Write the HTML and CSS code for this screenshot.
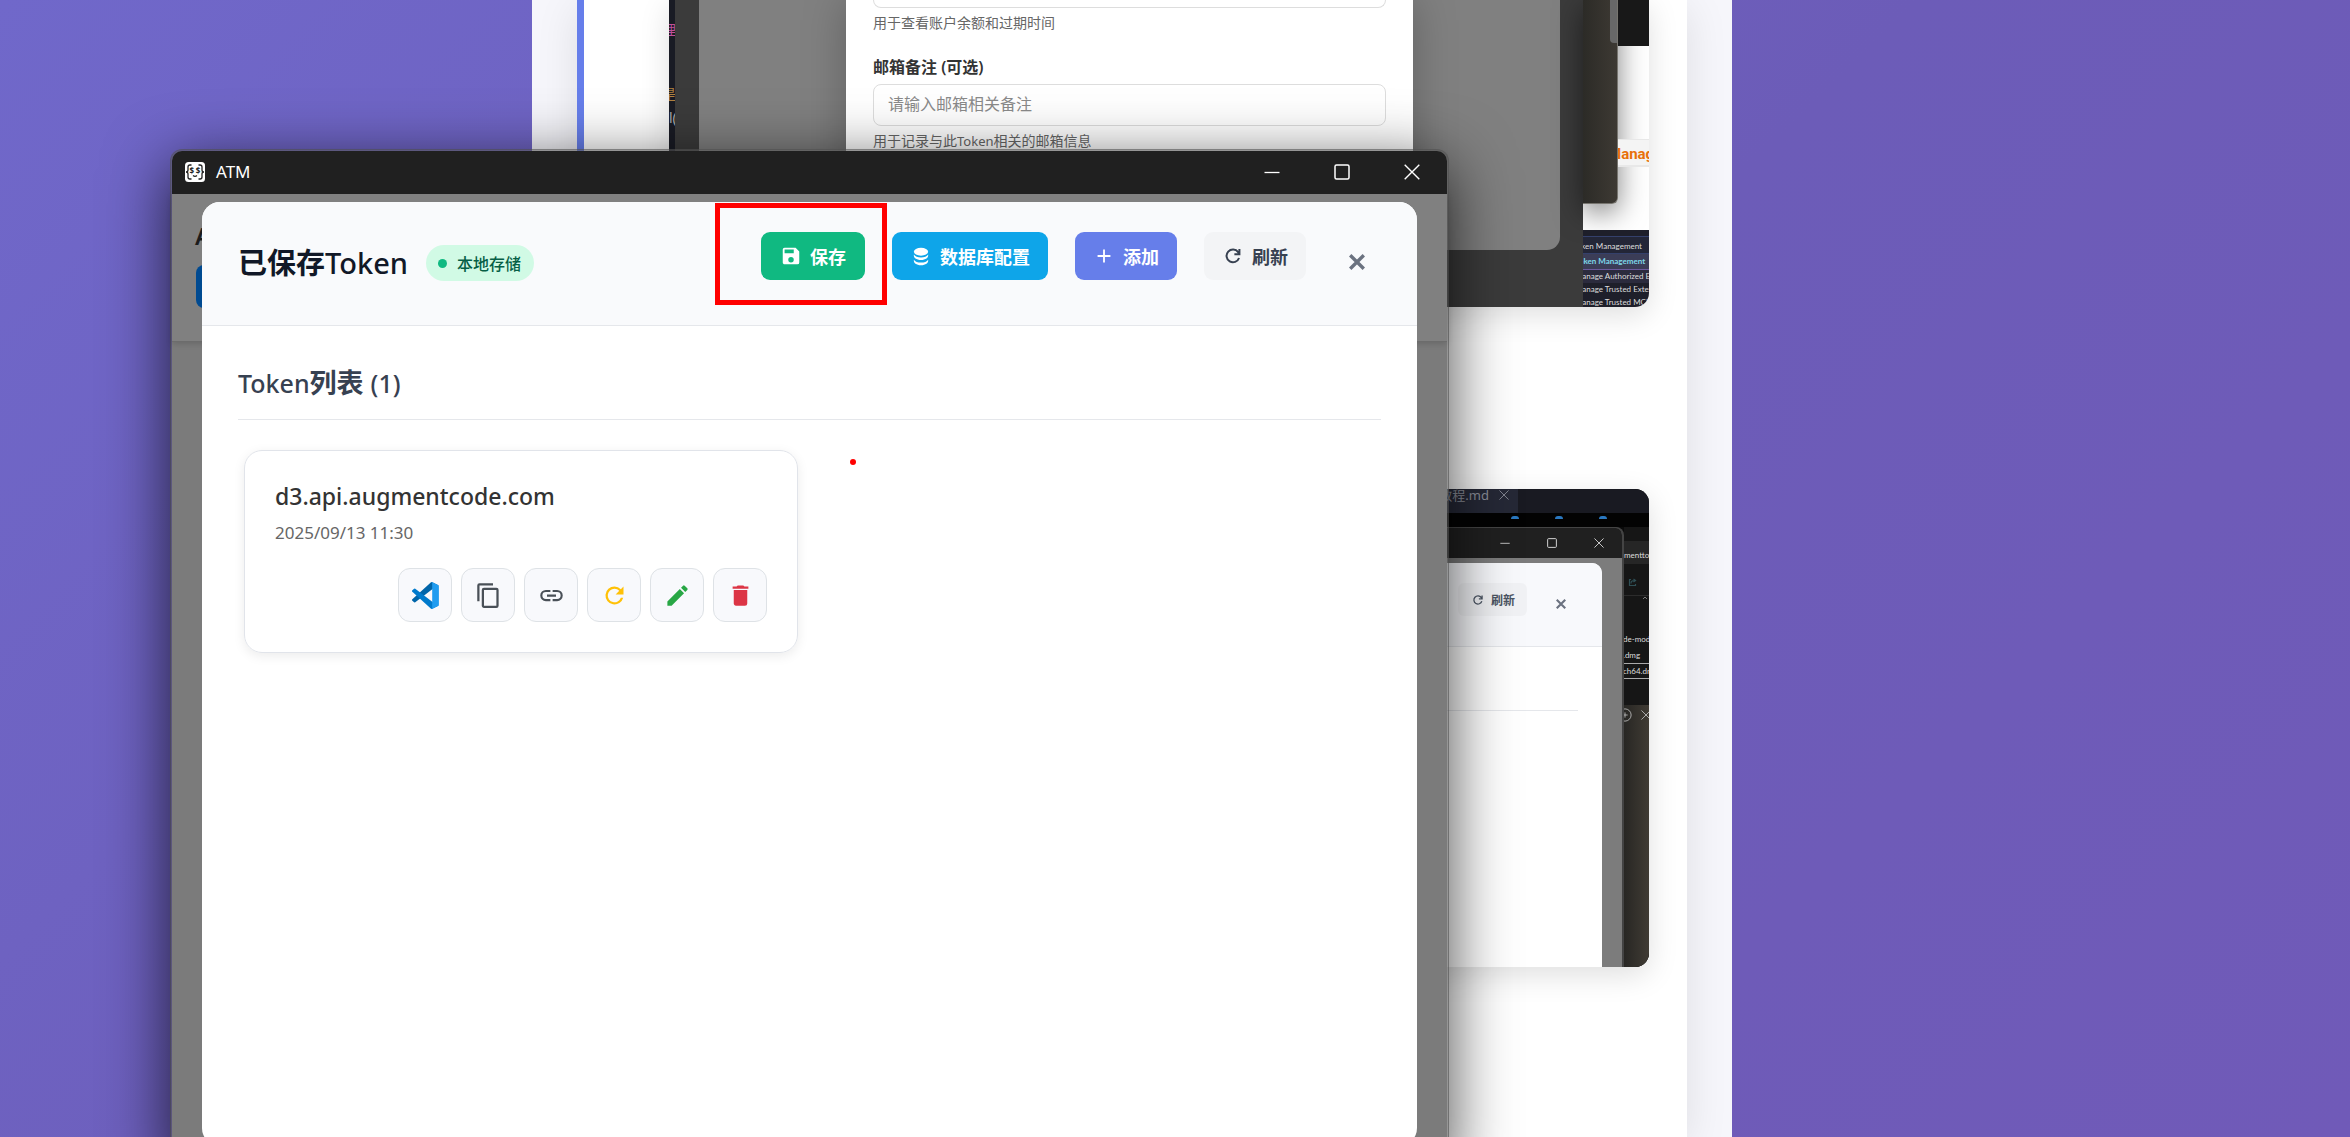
FILE: index.html
```html
<!DOCTYPE html>
<html lang="zh-CN">
<head>
<meta charset="utf-8">
<title>ATM</title>
<link rel="stylesheet" href="styles.css">
</head>
<body>
<svg class="defs" aria-hidden="true">
  <symbol id="i-refresh" viewBox="0 0 24 24"><path fill="currentColor" d="M17.65 6.35A7.96 7.96 0 0 0 12 4a8 8 0 1 0 7.73 10h-2.08A6 6 0 1 1 12 6c1.66 0 3.14.69 4.22 1.78L13 11h7V4z"/></symbol>
  <symbol id="i-refresh-thin" viewBox="0 0 24 24"><path fill="none" stroke="currentColor" stroke-width="2.2" d="M18.6 14.2A7 7 0 1 1 17.6 7.700L18.500 9M19 4.300V10H13.500"/></symbol>
  <symbol id="i-x" viewBox="0 0 16 16"><path fill="none" stroke="currentColor" stroke-width="3.400" d="M1.200 1.200l13.600 13.600M14.800 1.200L1.200 14.800"/></symbol>
  <symbol id="w-min" viewBox="0 0 16 16"><path fill="none" stroke="currentColor" stroke-width="1.300" d="M.5 8.500h15"/></symbol>
  <symbol id="w-max" viewBox="0 0 16 16"><rect x="1" y="1" width="14" height="14" rx="1.500" fill="none" stroke="currentColor" stroke-width="1.500"/></symbol>
  <symbol id="w-close" viewBox="0 0 16 16"><path fill="none" stroke="currentColor" stroke-width="1.400" d="M.7.7l14.600 14.600M15.300.7L.7 15.300"/></symbol>
</svg>

<div class="desktop">
  <main class="page">
    <section class="doc">
      <figure class="shot shot-form">
        <div class="code-strip"><span class="c-pink">理</span><span class="c-gold">是</span><span class="c-white">l(</span></div>
        <div class="shade">
          <div class="panel">
            <form class="form">
              <input class="field field-cut" type="text" aria-label="Portal URL">
              <p class="hint">用于查看账户余额和过期时间</p>
              <label class="label" for="mail">邮箱备注 (可选)</label>
              <input class="field" id="mail" type="text" placeholder="请输入邮箱相关备注">
              <p class="hint">用于记录与此<span>Token</span>相关的邮箱信息</p>
            </form>
          </div>
        </div>
        <div class="side">
          <div class="side-top">
            <div class="side-brown"><i></i></div>
            <div class="side-web"><div class="side-dark"></div><div class="side-link"><span>Manag</span></div></div>
          </div>
          <ul class="palette">
            <li class="p-input"><span>Token Management</span></li>
            <li class="p-active"><span>Token Management</span></li>
            <li class="p-hover"><span>Manage Authorized E</span></li>
            <li><span>Manage Trusted Extens</span></li>
            <li><span>Manage Trusted MCP</span></li>
          </ul>
        </div>
      </figure>

      <figure class="shot shot-list">
        <div class="tabbar"><div class="tab"><span>教程.md</span><svg><use href="#w-close"/></svg></div></div>
        <div class="browser-top"><i></i><i></i><i></i></div>
        <div class="shot-row">
          <div class="mini">
            <div class="mini-bar"><svg><use href="#w-min"/></svg><svg><use href="#w-max"/></svg><svg><use href="#w-close"/></svg></div>
            <div class="mini-body">
              <div class="mini-modal">
                <div class="mini-head">
                  <button class="mini-btn" type="button"><svg><use href="#i-refresh-thin"/></svg>刷新</button>
                  <button class="mini-close" type="button" aria-label="关闭"><svg><use href="#i-x"/></svg></button>
                </div>
                <div class="mini-line"></div>
              </div>
            </div>
          </div>
          <div class="rail">
            <div class="r-url"><span>menttov</span></div>
            <div class="r-icon"><svg viewBox="0 0 9 9"><path fill="none" stroke="#2f4f55" stroke-width="1.200" d="M3 1.500H1.500v6h6V6M3 5.500c0-2 1-3 3.500-3M5.500 1l2 1.500-2 1.500"/></svg></div>
            <div class="r-caret"><svg viewBox="0 0 6 4"><path fill="none" stroke="#777" d="M1 3l2-2 2 2"/></svg></div>
            <div class="r-file"><span>de-modi</span></div>
            <div class="r-file"><span>.dmg</span></div>
            <div class="r-file r-sel"><span>ch64.dm</span></div>
            <div class="r-wall"><svg viewBox="0 0 16 16"><circle cx="8" cy="8" r="7" fill="none" stroke="currentColor"/><path stroke="currentColor" d="M5 8h6M8 5v6"/></svg><svg class="r-x"><use href="#w-close"/></svg></div>
          </div>
        </div>
      </figure>
    </section>
  </main>

  <div class="window">
    <header class="titlebar">
      <svg class="app-icon" viewBox="0 0 20 20"><rect width="20" height="20" rx="3.500" fill="#fff"/><path fill="none" stroke="#222" stroke-width="1.300" d="M6.500 3H5Q3 3 3 5v3Q3 10 1 10 3 10 3 12v3q0 2 2 2h1.500M13.500 3H15q2 0 2 2v3q0 2 2 2-2 0-2 2v3q0 2-2 2h-1.500M8 13.500q2 1.600 4 0"/><text x="4.500" y="12" font-size="8" font-weight="700" fill="#222">$</text><text x="10.700" y="12" font-size="8" font-weight="700" fill="#222">$</text></svg>
      <span class="app-name">ATM</span>
      <button type="button" aria-label="最小化"><svg><use href="#w-min"/></svg></button>
      <button type="button" aria-label="最大化"><svg><use href="#w-max"/></svg></button>
      <button type="button" aria-label="关闭窗口"><svg><use href="#w-close"/></svg></button>
    </header>
    <div class="client">
      <div class="app-under"><b>A</b><i></i></div>
      <div class="modal">
        <div class="modal-head">
          <div class="heading"><h2>已保存<span>Token</span></h2><span class="badge">本地存储</span></div>
          <div class="actions">
            <button class="btn save" type="button"><svg viewBox="0 0 24 24"><path fill="currentColor" d="M17 3H5a2 2 0 0 0-2 2v14c0 1.100.9 2 2 2h14a2 2 0 0 0 2-2V7zm-5 16a3 3 0 1 1 0-6 3 3 0 0 1 0 6zm3-10H5V5h10z"/></svg>保存</button>
            <button class="btn db" type="button"><svg viewBox="0 0 24 24"><g fill="currentColor"><ellipse cx="12" cy="6" rx="9" ry="5"/><path d="M3 9.500c1.500 2.600 5 3.700 9 3.700s7.500-1.100 9-3.700c.8 4-3.300 7-9 7s-9.800-3-9-7zM3 16c1.500 2.600 5 3.700 9 3.700s7.500-1.100 9-3.700c.8 4-3.300 7-9 7s-9.800-3-9-7z"/></g></svg>数据库配置</button>
            <button class="btn add" type="button"><svg viewBox="0 0 24 24"><path fill="currentColor" d="M19 13h-6v6h-2v-6H5v-2h6V5h2v6h6z"/></svg>添加</button>
            <button class="btn refresh" type="button"><svg><use href="#i-refresh-thin"/></svg>刷新</button>
            <button class="close" type="button" aria-label="关闭"><svg><use href="#i-x"/></svg></button>
          </div>
        </div>
        <div class="modal-body">
          <h3><span>Token</span>列表 <span>(1)</span></h3>
          <div class="cards">
            <article class="card">
              <p class="host">d3.api.augmentcode.com</p>
              <p class="date">2025/09/13 11:30</p>
              <div class="tools">
                <button type="button" aria-label="VS Code"><svg class="i-lg" viewBox="0 0 100 100"><path fill="#0065a9" d="M96 11 75.500 1.200a6 6 0 0 0-7 1.200L1.300 63.500a4 4 0 0 0 0 6l5.500 5a4 4 0 0 0 5.300.3L93.200 13.200A4 4 0 0 1 100 16.500z"/><path fill="#007acc" d="M96 89 75.500 98.800a6 6 0 0 1-7-1.200L1.300 36.500a4 4 0 0 1 0-6l5.500-5a4 4 0 0 1 5.300-.3l81.100 61.600a4 4 0 0 0 6.800-3.300z"/><path fill="#1f9cf0" d="M75.500 98.800a6 6 0 0 1-7-1.200c2.300 2.300 6.300.7 6.300-2.500V5c0-3.300-4-5-6.300-2.600a6 6 0 0 1 7-1.200l20.600 9.900a6 6 0 0 1 3.500 5.600v66.600a6 6 0 0 1-3.500 5.600z"/></svg></button>
                <button type="button" aria-label="复制"><svg class="i-lg grey" viewBox="0 0 24 24"><path fill="currentColor" d="M16 1H4a2 2 0 0 0-2 2v14h2V3h12zm3 4H8a2 2 0 0 0-2 2v14c0 1.100.9 2 2 2h11a2 2 0 0 0 2-2V7a2 2 0 0 0-2-2zm0 16H8V7h11z"/></svg></button>
                <button type="button" aria-label="复制链接"><svg class="i-lg grey" viewBox="0 0 24 24"><path fill="currentColor" d="M3.900 12A3.100 3.100 0 0 1 7 8.900h4V7H7a5 5 0 0 0 0 10h4v-1.900H7A3.100 3.100 0 0 1 3.900 12zM8 13h8v-2H8zm9-6h-4v1.900h4a3.100 3.100 0 0 1 0 6.200h-4V17h4a5 5 0 0 0 0-10z"/></svg></button>
                <button type="button" aria-label="刷新"><svg class="i-lg yellow"><use href="#i-refresh"/></svg></button>
                <button type="button" aria-label="编辑"><svg class="i-lg green" viewBox="0 0 24 24"><path fill="currentColor" d="M3 17.250V21h3.750L17.810 9.940l-3.750-3.750zM20.710 7.040a1 1 0 0 0 0-1.410l-2.340-2.340a1 1 0 0 0-1.410 0l-1.830 1.830 3.750 3.750z"/></svg></button>
                <button type="button" aria-label="删除"><svg class="i-lg red" viewBox="0 0 24 24"><path fill="currentColor" d="M6 19c0 1.100.9 2 2 2h8a2 2 0 0 0 2-2V7H6zM19 4h-3.500l-1-1h-5l-1 1H5v2h14z"/></svg></button>
              </div>
            </article>
          </div>
        </div>
      </div>
    </div>
  </div>
  <div class="mark-box"></div>
  <div class="mark-dot"></div>
</div>
</body>
</html>
```
FILE: styles.css
```css
* { box-sizing: border-box; }
body {
  margin: 0;
  font-family: "Noto Sans", "Noto Sans CJK SC", sans-serif;
}
p, h2, h3, ul, figure { margin: 0; padding: 0; }
button { border: 0; padding: 0; background: none; font: inherit; color: inherit; }
svg { display: block; flex: none; }
.defs { position: absolute; width: 0; height: 0; }

.desktop {
  position: relative;
  height: 100vh;
  overflow: hidden;
  padding-right: 86px;
  background: linear-gradient(135deg, #7068ca, #6c5cb8 55%, #705ab8);
}

/* Document page behind the window */
.page {
  width: 1200px;
  height: 100%;
  margin: 0 auto;
  padding: 0 45px;
  background: #f6f6fb;
}
.doc {
  height: 100%;
  padding: 0 38px 0 85px;
  border-left: 7px solid #667eea;
  background: #fff;
  box-shadow: 0 8px 40px rgba(0, 0, 0, .1);
}
.shot {
  overflow: hidden;
  box-shadow: 0 8px 30px rgba(0, 0, 0, .13);
}
.shot-form {
  display: flex;
  height: 307px;
  border-radius: 0 0 14px 14px;
}
.code-strip {
  width: 6px;
  padding-top: 20px;
  overflow: hidden;
  background: #191b24;
  font-size: 14px;
  line-height: 20px;
}
.code-strip span { display: block; width: 20px; margin-left: -7px; }
.c-pink { color: #c0509a; }
.c-gold { padding-top: 44px; color: #b08040; }
.code-strip .c-white { margin-left: 0; padding-top: 4px; color: #aaa; }
.shade { flex: 1; padding: 0 23px 57px 24px; background: #3b3b3b; }
.panel {
  height: 100%;
  overflow: hidden;
  border-radius: 0 0 13px 13px;
  background: #808080;
}
.form {
  width: 567px;
  height: 100%;
  margin: 0 auto;
  padding: 0 27px;
  background: #fff;
  box-shadow: 0 0 40px rgba(0, 0, 0, .25);
}
.field {
  display: block;
  width: 100%;
  height: 42px;
  padding: 0 14px 2px;
  border: 1px solid #ddd;
  border-radius: 8px;
  background: #fff;
  font: inherit;
  font-size: 16px;
}
.field::placeholder { color: #8a8a8a; }
.field-cut { height: 8px; padding: 0; border-top: 0; border-radius: 0 0 8px 8px; }
.hint { padding-top: 5px; font-size: 14px; line-height: 20px; color: #666; }
.hint span { font-size: 13px; }
.label {
  display: block;
  padding: 22px 0 5px;
  font-size: 16px;
  font-weight: 600;
  line-height: 24px;
  color: #333;
}
.side { width: 66px; background: #fff; }
.side-top { display: flex; height: 230px; }
.side-brown {
  width: 35px;
  height: 204px;
  border: 1px solid #77756f;
  border-width: 0 1px 1px 0;
  border-radius: 0 0 6px 0;
  background: linear-gradient(90deg, #2c2b27, #3d3933);
  box-shadow: 0 8px 28px rgba(0, 0, 0, .5);
}
.side-brown i { display: block; width: 7px; height: 43px; margin-left: auto; border-radius: 0 0 0 4px; background: #686868; }
.side-web { flex: 1; overflow: hidden; }
.side-dark { height: 46px; background: #181818; }
.side-link {
  height: 28px;
  margin-top: 93px;
  border: solid #e8e8e8;
  border-width: 1px 0 2px;
  background: #f4f4f4;
  color: #e8710a;
  font: 700 15px/28px Roboto, sans-serif;
}
.side-link span { margin-left: -10px; }
.palette {
  position: relative;
  height: 77px;
  padding-top: 6px;
  overflow: hidden;
  list-style: none;
  background: #1e1f2a;
  color: #ddd;
  font-family: Lato, sans-serif;
  font-size: 8px;
  line-height: 13px;
  white-space: nowrap;
}
.palette span { margin-left: -8px; }
.p-input { height: 18px; border: solid #34406b; border-width: 1px 0; background: #232637; line-height: 18px; }
.palette .p-input span { margin-left: -10px; }
.p-active { border-bottom: 1px solid #6c5a9c; background: #3b3d57; color: #7fd8e8; font-weight: 700; line-height: 15px; }
.p-hover { background: #2b2b3d; }

.shot-list {
  height: 478px;
  margin-top: 182px;
  border-radius: 14px;
  background: #0a0a0a;
}
.tabbar { height: 24px; background: #191a22; }
.tab {
  display: flex;
  align-items: flex-start;
  justify-content: flex-end;
  gap: 10px;
  width: 849px;
  height: 100%;
  padding-right: 9px;
  background: #252836;
  color: #8b8e99;
  font-size: 13px;
  line-height: 13px;
}
.tab svg { width: 10px; height: 10px; margin-top: 1px; }
.browser-top {
  display: flex;
  justify-content: flex-end;
  gap: 36px;
  height: 14px;
  padding: 3px 42px 0 0;
  background: #030303;
}
.browser-top i { width: 8px; height: 3px; border-radius: 4px 4px 0 0; background: #2a78c0; }
.shot-row { display: flex; height: 440px; }
.mini {
  flex: 1;
  border: 1px solid #444;
  border-width: 1px 2px 0 0;
  border-radius: 0 8px 0 0;
  background: #7c7c7c;
  overflow: hidden;
}
.mini-bar {
  display: flex;
  align-items: center;
  justify-content: flex-end;
  gap: 37px;
  height: 30px;
  padding-right: 18px;
  background: #202020;
  color: #ddd;
}
.mini-bar svg { width: 10px; height: 10px; }
.mini-body { height: 409px; padding: 5px 20px 0 0; }
.mini-modal { height: 100%; border-radius: 0 10px 0 0; background: #fff; }
.mini-head {
  display: flex;
  align-items: flex-start;
  justify-content: flex-end;
  height: 84px;
  padding: 20px 24px 0;
  border-bottom: 1px solid #e5e7eb;
  border-radius: 0 10px 0 0;
  background: #f8f9fc;
}
.mini-btn {
  display: flex;
  align-items: center;
  gap: 6px;
  height: 33px;
  padding: 0 12px 0 13px;
  border-radius: 6px;
  background: #f1f2f5;
  color: #4b5563;
  font-size: 12px;
  font-weight: 600;
}
.mini-btn svg { width: 14px; height: 14px; }
.mini-close { width: 34px; height: 42px; margin-left: 17px; padding-left: 12px; color: #6b7280; }
.mini-close svg { width: 10px; height: 10px; }
.mini-line { height: 1px; margin: 63px 24px 0 0; background: #e5e7eb; }
.rail {
  display: flex;
  flex-direction: column;
  width: 25px;
  overflow: hidden;
  background: #161616;
  color: #ddd;
  font-family: Lato, sans-serif;
  font-size: 8px;
  line-height: 16px;
  white-space: nowrap;
}
.r-url { height: 23px; margin-top: 14px; padding-top: 6px; background: #262626; }
.r-icon { height: 32px; padding: 14px 0 0 4px; border-bottom: 1px solid #2c2c2c; }
.r-icon svg { width: 9px; height: 9px; }
.r-caret { height: 35px; padding-left: 18px; }
.r-caret svg { width: 6px; height: 4px; }
.r-file span { margin-left: -1px; }
.r-sel { border: solid #aaa; border-width: 1px 0; line-height: 14px; }
.r-wall {
  display: flex;
  flex: 1;
  gap: 9px;
  margin-top: 26px;
  padding-top: 3px;
  background: linear-gradient(90deg, #282724, #403b34);
  color: #bbb;
}
.r-wall svg { width: 14px; height: 14px; margin-left: -6px; }
.r-wall .r-x { width: 10px; height: 10px; margin: 2px 0 0; }

/* ATM window */
.window {
  position: absolute;
  top: 149px;
  bottom: -30px;
  left: 170px;
  display: flex;
  flex-direction: column;
  width: 1279px;
  border: 2px solid rgba(80, 80, 80, .6);
  border-radius: 12px;
  background: #7b7b7b;
  background-clip: padding-box;
  box-shadow: 0 16px 64px rgba(0, 0, 0, .72);
}
.titlebar {
  display: flex;
  align-items: center;
  height: 43px;
  padding: 0 0 2px 13px;
  border-radius: 10px 10px 0 0;
  background: #202020;
  color: #fff;
}
.app-icon { width: 20px; height: 20px; }
.app-name { flex: 1; margin-left: 11px; font-size: 17px; line-height: 24px; }
.titlebar button { display: grid; place-items: center; width: 70px; height: 40px; }
.titlebar button svg { width: 16px; height: 16px; }
.client { position: relative; display: flex; flex: 1; padding: 8px 30px 19px; }
.app-under {
  position: absolute;
  top: 0;
  left: 0;
  width: 100%;
  height: 148px;
  padding: 26px 23px;
  border-bottom: 1px solid #6c6c6c;
  background: #808080;
  box-shadow: 0 2px 6px rgba(0, 0, 0, .15);
}
.app-under b { display: block; font-size: 24px; font-weight: 600; line-height: 32px; color: #1c1c1c; }
.app-under i { display: block; width: 60px; height: 43px; margin: 13px 0 0 1px; border-radius: 8px; background: #004a91; }
.modal {
  position: relative;
  flex: 1;
  overflow: hidden;
  border-radius: 18px;
  background: #fff;
}
.modal-head {
  display: flex;
  align-items: flex-start;
  justify-content: space-between;
  height: 124px;
  padding: 30px 36px 0;
  border-bottom: 1px solid #e5e7eb;
  background: #f9fafc;
}
.heading { display: flex; align-items: center; gap: 18px; height: 62px; }
h2 { font-size: 29px; font-weight: 600; line-height: 38px; color: #111827; }
h2 span { font-weight: 500; }
.badge {
  display: flex;
  align-items: center;
  gap: 10px;
  height: 36px;
  padding: 0 13px 0 12px;
  border-radius: 18px;
  background: #d1fae5;
  color: #065f46;
  font-size: 16px;
  font-weight: 500;
}
.badge::before { content: ""; width: 9px; height: 9px; border-radius: 50%; background: #10b981; }
.actions { display: flex; gap: 27px; }
.btn {
  display: flex;
  align-items: center;
  gap: 8px;
  height: 48px;
  padding: 0 18px;
  border-radius: 9px;
  color: #fff;
  font-size: 18px;
  font-weight: 600;
}
.btn svg { width: 22px; height: 22px; }
.save { padding: 0 19px; background: #10b981; }
.db { background: #0ea5e9; }
.db svg { height: 19px; }
.add { background: #667eea; }
.refresh { background: #f3f4f6; color: #374151; }
.close { display: grid; place-items: center; width: 48px; height: 60px; color: #6b7280; }
.close svg { width: 16px; height: 16px; }
.modal-body { padding: 36px; }
h3 {
  padding-bottom: 15px;
  border-bottom: 1px solid #e5e7eb;
  color: #374151;
  font-size: 27px;
  font-weight: 600;
  line-height: 42px;
}
h3 span { font-size: 25px; font-weight: 500; }
.cards { display: grid; grid-template-columns: 1fr 1fr; gap: 23px; padding: 30px 6px; }
.card {
  padding: 29px 30px 30px;
  border: 1px solid #e1e4ea;
  border-radius: 18px;
  box-shadow: 0 3px 12px rgba(0, 0, 0, .08);
}
.host { font-size: 23px; font-weight: 500; line-height: 33px; color: #333; }
.date { margin-top: 8px; font-size: 17px; line-height: 24px; color: #666; }
.tools { display: flex; justify-content: flex-end; gap: 9px; margin-top: 23px; }
.tools button {
  display: grid;
  place-items: center;
  width: 54px;
  height: 54px;
  border: 1px solid #dee2e6;
  border-radius: 12px;
  background: #f8f9fc;
}
.i-lg { width: 27px; height: 27px; }
.grey { color: #495057; }
.yellow { color: #ffc107; }
.green { color: #28a745; }
.red { color: #dc3545; }

/* Red annotations drawn over the window */
.mark-box { position: absolute; top: 203px; left: 715px; width: 172px; height: 102px; border: 5px solid #f00; }
.mark-dot { position: absolute; top: 459px; left: 850px; width: 6px; height: 6px; border-radius: 50%; background: #f00; }
```
